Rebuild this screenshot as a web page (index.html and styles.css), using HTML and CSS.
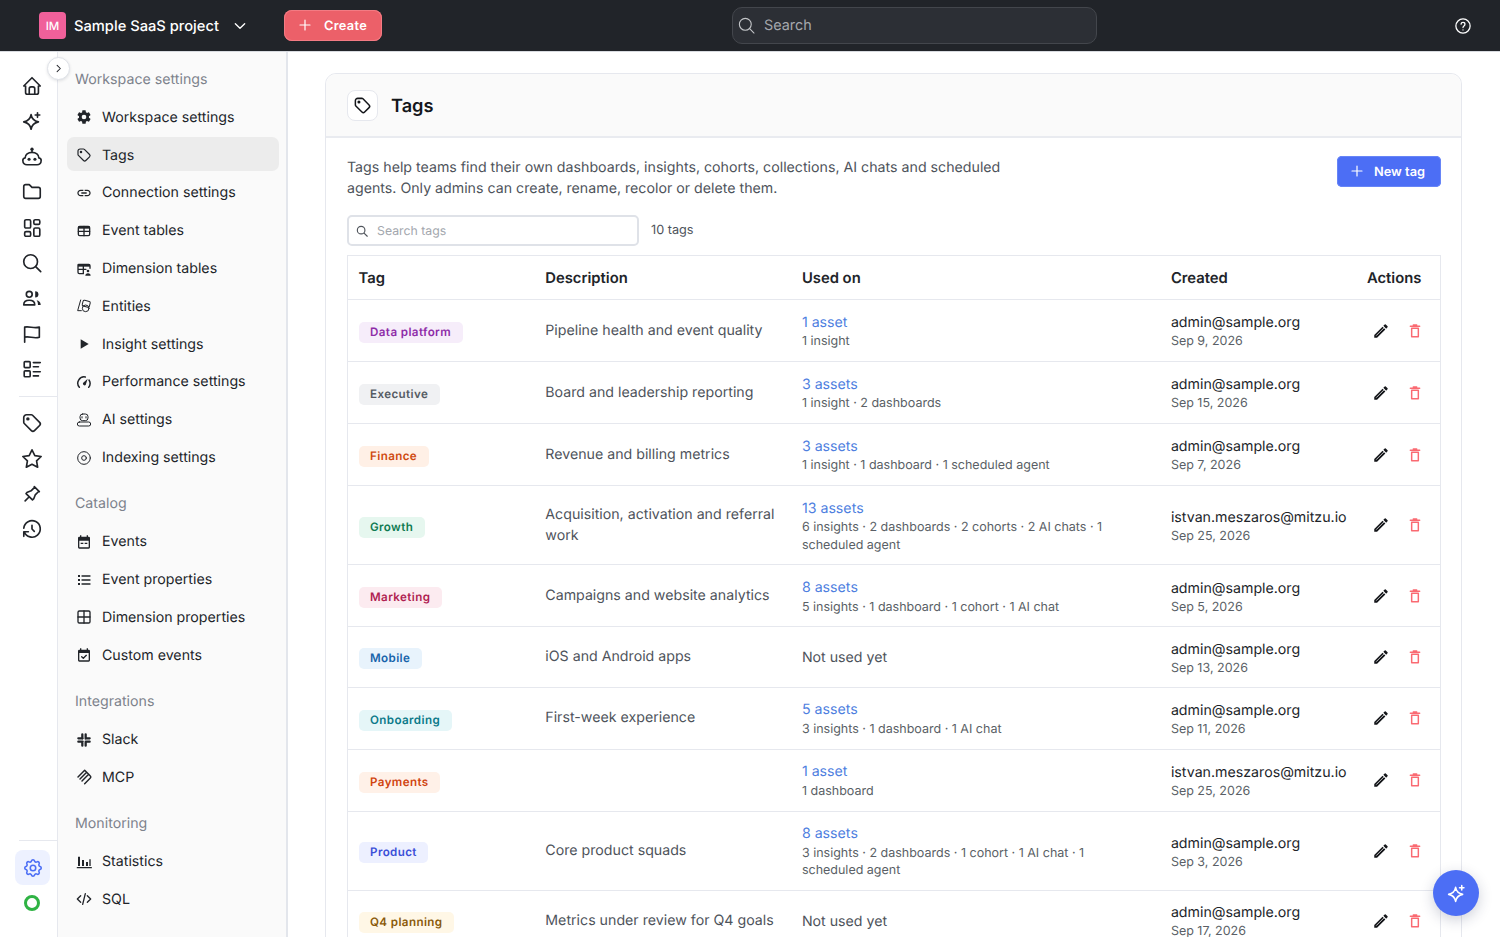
FILE: index.html
```html
<!DOCTYPE html>
<html lang="en">
<head>
<meta charset="utf-8">
<title>Tags</title>
<link rel="stylesheet" href="styles.css">
</head>
<body>
<svg class="defs" aria-hidden="true">
  <symbol id="i-tag" viewBox="0 0 24 24"><path d="M7.5 7.5m-1 0a1 1 0 1 0 2 0a1 1 0 1 0 -2 0M3 6v5.172a2 2 0 0 0 .586 1.414l7.71 7.71a2.41 2.41 0 0 0 3.408 0l5.592 -5.592a2.41 2.41 0 0 0 0 -3.408l-7.71 -7.71a2 2 0 0 0 -1.414 -.586h-5.172a3 3 0 0 0 -3 3z"/></symbol>
  <symbol id="i-spark" viewBox="0 0 24 24"><path d="M11 7c.7 4.200 3.400 7 8 8-4.600 1-7.300 3.800-8 8-.7-4.200-3.400-7-8-8 4.600-1 7.300-3.800 8-8z" transform="translate(0 -2)"/><path d="M18 3v5M15.500 5.500h5"/></symbol>
  <symbol id="i-pencil" viewBox="0 0 24 24"><path class="solid" d="M3 17.250V21h3.750L17.810 9.940l-3.750-3.750L3 17.250zM20.710 7.040a1 1 0 0 0 0-1.410l-2.340-2.340a1 1 0 0 0-1.410 0l-1.830 1.830 3.750 3.750 1.830-1.830z"/><path class="stripe" d="M6 17.800L15.800 8"/></symbol>
  <symbol id="i-trash" viewBox="0 0 24 24"><path d="M7 8h10v12.500H7zM5 5h14M9.500 3h5"/></symbol>
  <symbol id="i-plus" viewBox="0 0 24 24"><path d="M12 4.500v15M4.500 12h15"/></symbol>
</svg>

<header class="topbar">
  <div class="project">
    <span class="avatar">IM</span>
    <span class="project-name">Sample SaaS project</span>
    <svg class="chev" viewBox="0 0 24 24"><path d="M5 8.500l7 7 7-7"/></svg>
  </div>
  <button class="btn btn-create"><svg class="btn-plus"><use href="#i-plus"/></svg>Create</button>
  <div class="global-search">
    <svg class="gs-icon" viewBox="0 0 24 24"><circle cx="10.500" cy="10.500" r="7.500"/><path d="M16 16l5.500 5.500"/></svg>
    <span>Search</span>
  </div>
  <svg class="help" viewBox="0 0 24 24"><circle cx="12" cy="12" r="9.500"/><path d="M12 17.200v.1M12 14c0-2.200 2.600-2 2.600-4.300 0-1.400-1.100-2.400-2.600-2.400s-2.500.9-2.600 2.200"/></svg>
</header>

<div class="app">
  <nav class="rail">
    <div class="rail-group">
      <svg class="ri" viewBox="0 0 24 24"><path d="M5 12H3l9-9 9 9h-2M5 12v7a2 2 0 0 0 2 2h10a2 2 0 0 0 2-2v-7M9 21v-6a2 2 0 0 1 2-2h2a2 2 0 0 1 2 2v6"/></svg>
      <svg class="ri"><use href="#i-spark"/></svg>
      <svg class="ri" viewBox="0 0 24 24"><path d="M4.500 13c0-3.500 3.300-6 7.500-6s7.500 2.500 7.500 6c1.500.3 2.500 1.300 2.500 2.800 0 2.700-2 4.700-4.500 4.700h-11C4 20.500 2 18.500 2 15.800c0-1.500 1-2.500 2.500-2.800zM12 7V4.500"/><circle class="solid" cx="12" cy="3.500" r="1.800"/><circle class="solid" cx="8.800" cy="14.500" r="1.700"/><circle class="solid" cx="15.200" cy="14.500" r="1.700"/></svg>
      <svg class="ri" viewBox="0 0 24 24"><path d="M5 4h4l3 3h7a2 2 0 0 1 2 2v8a2 2 0 0 1-2 2H5a2 2 0 0 1-2-2V6a2 2 0 0 1 2-2"/></svg>
      <svg class="ri" viewBox="0 0 24 24"><rect x="4" y="3" width="6.500" height="9" rx="1.500"/><rect x="4" y="16" width="6.500" height="5" rx="1.500"/><rect x="14" y="12" width="6.500" height="9" rx="1.500"/><rect x="14" y="3" width="6.500" height="5" rx="1.500"/></svg>
      <svg class="ri" viewBox="0 0 24 24"><circle cx="10.500" cy="10.500" r="7.500"/><path d="M16 16l5.500 5.500"/></svg>
      <svg class="ri" viewBox="0 0 24 24"><circle cx="9" cy="8" r="3.200"/><path class="solid" d="M15.500 4.500a3.500 3.500 0 0 1 0 7z"/><path d="M3 19.500c0-3.500 2.500-5 6-5s6 1.500 6 5z"/><path class="solid" d="M17 14.500c2.500.4 4.500 2 4.500 5h-3c0-2-.4-3.600-1.500-5z"/></svg>
      <svg class="ri" viewBox="0 0 24 24"><path d="M4 4.500c4.500-1.500 10.500 2 16 0v11c-5.500 2-11.500-1.500-16 0M4 4.500V21"/></svg>
      <svg class="ri" viewBox="0 0 24 24"><path d="M13.500 5H21M13.500 9.500H19M13.500 15H21M13.500 19.500H19"/><rect x="3.500" y="4" width="6.500" height="6.500" rx="1"/><rect x="3.500" y="14" width="6.500" height="6.500" rx="1"/></svg>
    </div>
    <div class="rail-group rail-second">
      <svg class="ri"><use href="#i-tag"/></svg>
      <svg class="ri" viewBox="0 0 24 24"><path d="M12 17.750l-6.172 3.245 1.179-6.873-5-4.867 6.900-1 3.086-6.253 3.086 6.253 6.900 1-5 4.867 1.179 6.873z"/></svg>
      <svg class="ri" viewBox="0 0 24 24"><path d="M15 4.500l-4 4-4 1.500-1.500 1.500 7 7 1.500-1.500 1.500-4 4-4M9 15l-4.500 4.500M14.500 4l5.500 5.500"/></svg>
      <svg class="ri" viewBox="0 0 24 24"><path d="M12 8v4l2.500 2.500M3.050 11a9 9 0 1 1 .5 4m-.5 5v-5h5"/></svg>
    </div>
    <div class="rail-bottom">
      <span class="rail-active">
        <svg class="ri ri-blue" viewBox="0 0 24 24"><path d="M10.325 4.317c.426-1.756 2.924-1.756 3.350 0a1.724 1.724 0 0 0 2.573 1.066c1.543-.94 3.310.826 2.370 2.370a1.724 1.724 0 0 0 1.065 2.572c1.756.426 1.756 2.924 0 3.350a1.724 1.724 0 0 0-1.066 2.573c.94 1.543-.826 3.310-2.370 2.370a1.724 1.724 0 0 0-2.572 1.065c-.426 1.756-2.924 1.756-3.350 0a1.724 1.724 0 0 0-2.573-1.066c-1.543.94-3.310-.826-2.370-2.370a1.724 1.724 0 0 0-1.065-2.572c-1.756-.426-1.756-2.924 0-3.350a1.724 1.724 0 0 0 1.066-2.573c-.94-1.543.826-3.310 2.370-2.370 1 .608 2.296.07 2.572-1.065z"/><circle cx="12" cy="12" r="3"/></svg>
      </span>
      <span class="status-ring"></span>
    </div>
  </nav>

  <button class="collapse"><svg viewBox="0 0 24 24"><path d="M9 5l7 7-7 7"/></svg></button>

  <aside class="subnav">
    <h4 class="sub-title">Workspace settings</h4>
    <a class="sub-item"><svg class="si" viewBox="0 0 24 24"><path class="solid" d="M19.400 13c.04-.33.07-.66.07-1s-.03-.67-.07-1l2.110-1.650a.5.5 0 0 0 .12-.64l-2-3.460a.5.5 0 0 0-.61-.22l-2.490 1a7.300 7.300 0 0 0-1.690-.98l-.38-2.650A.49.49 0 0 0 14 2h-4a.49.49 0 0 0-.49.42l-.38 2.650c-.61.25-1.170.59-1.690.98l-2.490-1a.5.5 0 0 0-.61.22l-2 3.460a.49.49 0 0 0 .12.64L4.570 11c-.04.33-.07.67-.07 1s.03.67.07 1l-2.110 1.650a.5.5 0 0 0-.12.64l2 3.460c.12.22.39.3.61.22l2.490-1c.52.4 1.080.73 1.690.98l.38 2.650c.03.24.24.42.49.42h4c.25 0 .46-.18.49-.42l.38-2.650c.61-.25 1.170-.59 1.690-.98l2.490 1c.23.09.49 0 .61-.22l2-3.460a.5.5 0 0 0-.12-.64L19.400 13zM12 15.500a3.500 3.500 0 1 1 0-7 3.500 3.500 0 0 1 0 7z"/></svg>Workspace settings</a>
    <a class="sub-item is-active"><svg class="si si-mid"><use href="#i-tag"/></svg>Tags</a>
    <a class="sub-item"><svg class="si" viewBox="0 0 24 24"><path class="solid" d="M3.900 12c0-1.710 1.390-3.100 3.100-3.100h4V7H7c-2.760 0-5 2.240-5 5s2.240 5 5 5h4v-1.900H7c-1.710 0-3.100-1.390-3.100-3.100zM8 13h8v-2H8v2zm9-6h-4v1.900h4c1.710 0 3.100 1.390 3.100 3.100s-1.390 3.100-3.100 3.100h-4V17h4c2.760 0 5-2.240 5-5s-2.240-5-5-5z"/></svg>Connection settings</a>
    <a class="sub-item"><svg class="si" viewBox="0 0 24 24"><rect x="3.500" y="5" width="17" height="14" rx="2"/><path d="M3.500 12.500h17M12 5v14"/><path class="solid" d="M3.500 5h17v3.500h-17z"/></svg>Event tables</a>
    <a class="sub-item"><svg class="si" viewBox="0 0 24 24"><path d="M11 19H5a2 2 0 0 1-2-2V6a1 1 0 0 1 1-1h15a2 2 0 0 1 2 2v4M3 12.500h12M11 5v14"/><path class="solid" d="M3 5h18v3.500H3z"/><circle class="solid" cx="18" cy="15" r="2"/><path class="solid" d="M14 22c0-2 1.500-3.500 4-3.500s4 1.500 4 3.500z"/></svg>Dimension tables</a>
    <a class="sub-item"><svg class="si si-thin" viewBox="0 0 24 24"><path d="M7 3L2.500 19H8"/><rect x="10" y="4" width="11" height="9" rx="2" transform="rotate(15 15 8)"/><circle cx="14.500" cy="15.500" r="5"/></svg>Entities</a>
    <a class="sub-item"><svg class="si" viewBox="0 0 24 24"><path class="solid" d="M7 5l12 7-12 7z"/></svg>Insight settings</a>
    <a class="sub-item"><svg class="si si-bold" viewBox="0 0 24 24"><path class="arc" d="M5 20a9.500 9.500 0 0 1 9-15.500M19.500 9a9.500 9.500 0 0 1-.5 11"/><path class="solid" d="M17.500 7l-3 9.500a2.600 2.600 0 0 1-4-3z"/></svg>Performance settings</a>
    <a class="sub-item"><svg class="si si-thin" viewBox="0 0 24 24"><rect x="6" y="3" width="12" height="10" rx="4"/><path d="M9 7v2M15 7v2M5 15h14a2 2 0 0 1 0 6H5a2 2 0 0 1 0-6z"/></svg>AI settings</a>
    <a class="sub-item"><svg class="si si-thin" viewBox="0 0 24 24"><circle cx="12" cy="12" r="9.500"/><circle cx="12" cy="12" r="3.500"/></svg>Indexing settings</a>

    <h4 class="sub-title">Catalog</h4>
    <a class="sub-item"><svg class="si" viewBox="0 0 24 24"><path class="solid" d="M19 4h-1V2h-2v2H8V2H6v2H5a2 2 0 0 0-2 2v14a2 2 0 0 0 2 2h14a2 2 0 0 0 2-2V6a2 2 0 0 0-2-2zm0 16H5V10h14v10zM7 13h4v2H7zm6 0h4v2h-4z"/></svg>Events</a>
    <a class="sub-item"><svg class="si" viewBox="0 0 24 24"><path d="M9 6h12M9 12h12M9 18h12"/><path class="solid" d="M3 4.500h3v3H3zM3 10.500h3v3H3zM3 16.500h3v3H3z"/></svg>Event properties</a>
    <a class="sub-item"><svg class="si" viewBox="0 0 24 24"><rect x="3" y="3" width="18" height="18" rx="2"/><path d="M12 3v18M3 12h18"/></svg>Dimension properties</a>
    <a class="sub-item"><svg class="si" viewBox="0 0 24 24"><path class="solid" d="M19 4h-1V2h-2v2H8V2H6v2H5a2 2 0 0 0-2 2v14a2 2 0 0 0 2 2h14a2 2 0 0 0 2-2V6a2 2 0 0 0-2-2zm0 16H5V9h14v11z"/><path d="M8.500 14.500l2.500 2.500 4.500-4.500"/></svg>Custom events</a>

    <h4 class="sub-title">Integrations</h4>
    <a class="sub-item"><svg class="si si-heavy" viewBox="0 0 24 24"><path d="M3.500 9.500h6.500M14.500 9.500h6M3.500 14.500h6.500M14.500 14.500h6M9.500 3.500v6.500M9.500 14.500v6M14.500 3.500v6.500M14.500 14.500v6"/></svg>Slack</a>
    <a class="sub-item"><svg class="si si-bold" viewBox="0 0 24 24"><path d="M3 12L13 2l3 3L6 15M6 15l10-10 3 3L9 18M9 18L19 8l2.500 2.500a2 2 0 0 1 0 3L13 22"/></svg>MCP</a>

    <h4 class="sub-title">Monitoring</h4>
    <a class="sub-item"><svg class="si" viewBox="0 0 24 24"><path class="solid" d="M3 4h3v14H3zM9 9h3v9H9zM15 12h3v6h-3zM20 8h2v10h-2z"/><path d="M2 20.500h21"/></svg>Statistics</a>
    <a class="sub-item"><svg class="si" viewBox="0 0 24 24"><path d="M7 7l-5 5 5 5M17 7l5 5-5 5M14 4l-4 16"/></svg>SQL</a>
  </aside>

  <main class="main">
    <section class="card">
      <div class="card-head">
        <span class="head-icon"><svg><use href="#i-tag"/></svg></span>
        <h1>Tags</h1>
      </div>
      <div class="card-body">
        <div class="intro">
          <p>Tags help teams find their own dashboards, insights, cohorts, collections, AI chats and scheduled agents. Only admins can create, rename, recolor or delete them.</p>
          <button class="btn btn-new"><svg class="btn-plus"><use href="#i-plus"/></svg>New tag</button>
        </div>
        <div class="filter">
          <div class="tag-search">
            <svg viewBox="0 0 24 24"><circle cx="10.500" cy="10.500" r="6.500"/><path d="M15.500 15.500l5.500 5.500"/></svg>
            <span>Search tags</span>
          </div>
          <span class="count">10 tags</span>
        </div>
        <table class="tags">
          <thead>
            <tr><th class="c-tag">Tag</th><th class="c-desc">Description</th><th class="c-used">Used on</th><th class="c-created">Created</th><th class="c-act">Actions</th></tr>
          </thead>
          <tbody>
            <tr>
              <td><span class="pill p-purple">Data platform</span></td>
              <td class="desc">Pipeline health and event quality</td>
              <td><a class="assets">1 asset</a><div class="sub">1 insight</div></td>
              <td class="owner"><div class="who">admin@sample.org</div><div class="sub">Sep 9, 2026</div></td>
              <td class="acts"><svg class="a-edit"><use href="#i-pencil"/></svg><svg class="a-del"><use href="#i-trash"/></svg></td>
            </tr>
            <tr>
              <td><span class="pill p-gray">Executive</span></td>
              <td class="desc">Board and leadership reporting</td>
              <td><a class="assets">3 assets</a><div class="sub">1 insight · 2 dashboards</div></td>
              <td class="owner"><div class="who">admin@sample.org</div><div class="sub">Sep 15, 2026</div></td>
              <td class="acts"><svg class="a-edit"><use href="#i-pencil"/></svg><svg class="a-del"><use href="#i-trash"/></svg></td>
            </tr>
            <tr>
              <td><span class="pill p-orange">Finance</span></td>
              <td class="desc">Revenue and billing metrics</td>
              <td><a class="assets">3 assets</a><div class="sub">1 insight · 1 dashboard · 1 scheduled agent</div></td>
              <td class="owner"><div class="who">admin@sample.org</div><div class="sub">Sep 7, 2026</div></td>
              <td class="acts"><svg class="a-edit"><use href="#i-pencil"/></svg><svg class="a-del"><use href="#i-trash"/></svg></td>
            </tr>
            <tr>
              <td><span class="pill p-green">Growth</span></td>
              <td class="desc">Acquisition, activation and referral work</td>
              <td><a class="assets">13 assets</a><div class="sub">6 insights · 2 dashboards · 2 cohorts · 2 AI chats · 1 scheduled agent</div></td>
              <td class="owner"><div class="who">istvan.meszaros@mitzu.io</div><div class="sub">Sep 25, 2026</div></td>
              <td class="acts"><svg class="a-edit"><use href="#i-pencil"/></svg><svg class="a-del"><use href="#i-trash"/></svg></td>
            </tr>
            <tr>
              <td><span class="pill p-pink">Marketing</span></td>
              <td class="desc">Campaigns and website analytics</td>
              <td><a class="assets">8 assets</a><div class="sub">5 insights · 1 dashboard · 1 cohort · 1 AI chat</div></td>
              <td class="owner"><div class="who">admin@sample.org</div><div class="sub">Sep 5, 2026</div></td>
              <td class="acts"><svg class="a-edit"><use href="#i-pencil"/></svg><svg class="a-del"><use href="#i-trash"/></svg></td>
            </tr>
            <tr>
              <td><span class="pill p-blue">Mobile</span></td>
              <td class="desc">iOS and Android apps</td>
              <td class="none">Not used yet</td>
              <td class="owner"><div class="who">admin@sample.org</div><div class="sub">Sep 13, 2026</div></td>
              <td class="acts"><svg class="a-edit"><use href="#i-pencil"/></svg><svg class="a-del"><use href="#i-trash"/></svg></td>
            </tr>
            <tr>
              <td><span class="pill p-teal">Onboarding</span></td>
              <td class="desc">First-week experience</td>
              <td><a class="assets">5 assets</a><div class="sub">3 insights · 1 dashboard · 1 AI chat</div></td>
              <td class="owner"><div class="who">admin@sample.org</div><div class="sub">Sep 11, 2026</div></td>
              <td class="acts"><svg class="a-edit"><use href="#i-pencil"/></svg><svg class="a-del"><use href="#i-trash"/></svg></td>
            </tr>
            <tr>
              <td><span class="pill p-red">Payments</span></td>
              <td class="desc"></td>
              <td><a class="assets">1 asset</a><div class="sub">1 dashboard</div></td>
              <td class="owner"><div class="who">istvan.meszaros@mitzu.io</div><div class="sub">Sep 25, 2026</div></td>
              <td class="acts"><svg class="a-edit"><use href="#i-pencil"/></svg><svg class="a-del"><use href="#i-trash"/></svg></td>
            </tr>
            <tr>
              <td><span class="pill p-indigo">Product</span></td>
              <td class="desc">Core product squads</td>
              <td><a class="assets">8 assets</a><div class="sub">3 insights · 2 dashboards · 1 cohort · 1 AI chat · 1 scheduled agent</div></td>
              <td class="owner"><div class="who">admin@sample.org</div><div class="sub">Sep 3, 2026</div></td>
              <td class="acts"><svg class="a-edit"><use href="#i-pencil"/></svg><svg class="a-del"><use href="#i-trash"/></svg></td>
            </tr>
            <tr>
              <td><span class="pill p-yellow">Q4 planning</span></td>
              <td class="desc">Metrics under review for Q4 goals</td>
              <td class="none">Not used yet</td>
              <td class="owner"><div class="who">admin@sample.org</div><div class="sub">Sep 17, 2026</div></td>
              <td class="acts"><svg class="a-edit"><use href="#i-pencil"/></svg><svg class="a-del"><use href="#i-trash"/></svg></td>
            </tr>
          </tbody>
        </table>
      </div>
    </section>
  </main>
</div>

<button class="fab"><svg><use href="#i-spark"/></svg></button>
</body>
</html>
```
FILE: styles.css
```css
* { box-sizing: border-box; }
html, body { margin: 0; height: 100%; overflow: hidden; }
body { font-family: Inter, "Liberation Sans", sans-serif; font-size: 14.2px; color: #212429; background: #fff; text-rendering: geometricPrecision; }
.defs { position: absolute; width: 0; height: 0; }
svg { fill: none; stroke: currentColor; stroke-linecap: round; stroke-linejoin: round; display: block; }
.solid { fill: currentColor; stroke: none; }
.stripe { stroke: #fff; stroke-width: 1; }

.topbar { height: 52px; background: #212429; display: flex; align-items: center; padding-left: 39px; color: #fff; border-bottom: 1px solid #d8dbe0; }
.project { display: flex; align-items: center; width: 245px; }
.avatar { width: 27px; height: 27px; border-radius: 4px; background: #f0609a; font-size: 11.500px; font-weight: 500; display: flex; align-items: center; justify-content: center; margin-right: 8px; }
.project-name { font-size: 14.700px; font-weight: 500; white-space: nowrap; }
.chev { width: 16px; height: 16px; margin-left: 13px; stroke-width: 2; }
.btn { border: 0; font-family: inherit; text-rendering: inherit; color: #fff; display: flex; align-items: center; font-weight: 600; font-size: 12.800px; letter-spacing: .3px; border-radius: 7px; height: 31px; padding-top: 2px; }
.btn-plus { width: 16px; height: 16px; stroke-width: 1.800; margin-bottom: 2px; }
.btn-create { background: #ec6069; width: 98px; padding-left: 13px; padding-right: 0; gap: 11px; border-radius: 8px; box-shadow: inset 0 0 0 1px #f37b83; }
.global-search { width: 365px; height: 37px; margin-left: 350px; background: #2c2f35; border: 1px solid #43464c; border-radius: 10px; display: flex; align-items: center; padding-left: 4px; gap: 8px; color: #a5a8ad; font-size: 14.400px; }
.gs-icon { width: 19px; height: 19px; stroke-width: 1.400; color: #c3c5c8; }
.help { width: 18px; height: 18px; margin-left: auto; margin-right: 28px; stroke-width: 1.700; }

.app { display: flex; height: calc(100vh - 52px); position: relative; }

.rail { width: 58px; flex: none; border-right: 1px solid #e6e8ee; display: flex; flex-direction: column; padding-top: 23px; }
.rail-group { display: flex; flex-direction: column; gap: 13.400px; margin-left: 19px; padding: 0 0 16px 2px; }
.rail-second { border-top: 1px solid #e6e8ee; padding-top: 15px; }
.ri { width: 22px; height: 22px; stroke-width: 1.800; color: #212429; }
.ri-blue { color: #4c6ef5; stroke-width: 1.700; }
.rail-bottom { margin-top: auto; margin-left: 19px; border-top: 1px solid #e6e8ee; padding: 9px 0 26px; display: flex; flex-direction: column; align-items: flex-start; gap: 10px; }
.rail-active { width: 35px; height: 35px; margin-left: -4px; background: #edf1ff; border-radius: 8px; display: flex; align-items: center; justify-content: center; }
.status-ring { width: 16px; height: 16px; margin-left: 5px; border: 3.500px solid #2fb344; border-radius: 50%; }

.collapse { position: absolute; left: 47px; top: 5px; width: 23px; height: 23px; padding: 0; border-radius: 50%; background: #fff; border: 1px solid #dfe2e8; display: flex; align-items: center; justify-content: center; z-index: 2; color: #212429; box-shadow: 0 1px 3px rgba(30, 40, 60, .12); }
.collapse svg { width: 11px; height: 11px; stroke-width: 2.200; }

.subnav { width: 230px; flex: none; background: #fafafa; border-right: 2px solid #e3e6ec; padding: 17px 7px 0 9px; overflow: hidden; }
.sub-title { margin: 0 0 9.500px; padding-left: 8px; font-weight: 400; font-size: 14.200px; line-height: 21px; color: #7d828c; }
.sub-item { display: flex; align-items: center; height: 33.800px; margin-bottom: 4px; border-radius: 7px; padding: 2px 0 0 9px; gap: 10px; color: #212429; white-space: nowrap; }
.sub-item + .sub-title { margin-top: 20px; }
.is-active { background: #ececec; }
.si { width: 16px; height: 16px; stroke-width: 2; flex: none; }
.si-mid { stroke-width: 1.800; }
.si-thin { stroke-width: 1.500; }
.si-bold { stroke-width: 2.200; }
.si-heavy { stroke-width: 3.400; }

.main { flex: 1; padding: 21px 38px 0 37px; overflow: hidden; min-width: 0; }
.card { border: 1px solid #e6e8ee; border-radius: 11px; background: #fff; }
.card-head { height: 64px; background: #fafafa; border-bottom: 2px solid #e9ebf0; border-radius: 11px 11px 0 0; display: flex; align-items: center; padding-left: 21px; gap: 13px; }
.head-icon { width: 31px; height: 31px; background: #fff; border: 1px solid #e6e8ee; border-radius: 8px; display: flex; align-items: center; justify-content: center; }
.head-icon svg { width: 19px; height: 19px; stroke-width: 1.900; color: #14161a; }
h1 { margin: 2px 0 0; font-size: 18.200px; font-weight: 600; color: #14161a; }

.card-body { padding: 18px 20px 0 21px; }
.intro { display: flex; justify-content: space-between; align-items: flex-start; }
.intro p { margin: 0; padding-top: 1px; width: 670px; line-height: 21px; color: #4e535b; }
.btn-new { background: #4c6ef5; width: 104px; padding-left: 12px; gap: 9px; border-radius: 5px; letter-spacing: 0; box-shadow: inset 0 0 0 1px #6785f7; }
.filter { display: flex; align-items: center; margin-top: 16px; gap: 12px; }
.tag-search { width: 292px; height: 31px; border: 2px solid #dfe2e8; border-radius: 5px; display: flex; align-items: center; padding-left: 6px; gap: 8px; color: #a3a7ae; font-size: 12.300px; }
.tag-search svg { width: 14px; height: 14px; stroke-width: 2; color: #50555c; }
.count { font-size: 12.700px; color: #4e535b; }

.tags { width: 1094px; margin-top: 9px; border-collapse: collapse; table-layout: fixed; border: 1px solid #e6e8ee; }
.tags th { text-align: left; font-weight: 600; height: 44px; padding: 0 11px; color: #212429; font-size: 14.800px; border-bottom: 1px solid #e6e8ee; }
.c-tag { width: 186.800px; }
.c-desc { width: 256.600px; }
.c-used { width: 369px; }
.c-created { width: 196px; }
.tags td { padding: 11.500px 11px 10.500px; border-bottom: 1px solid #e6e8ee; vertical-align: middle; line-height: 21px; }
.tags td.desc, .tags td.acts { padding-top: 10.500px; padding-bottom: 11.500px; }
.tags td.owner { padding-top: 12.500px; padding-bottom: 9.500px; }
.tags th:first-child, .tags td:first-child { padding-left: 10.500px; }
.desc, .none { color: #4e535b; }
.assets { color: #4f7fdf; display: block; line-height: 21.700px; }
.sub { font-size: 12.500px; line-height: 17.300px; color: #5a5f66; }
.who { color: #212429; line-height: 20px; }
.pill { display: block; width: fit-content; margin-top: 3px; height: 21px; line-height: 21px; padding: 0 11.500px; border-radius: 5px; font-size: 11.600px; font-weight: 600; letter-spacing: .4px; white-space: nowrap; }
.p-purple { background: #f6edfa; color: #8e2ca8; }
.p-gray { background: #f0f1f3; color: #555b63; }
.p-orange { background: #fff0e6; color: #cf4a10; }
.p-green { background: #e6f7ef; color: #0f7b52; }
.p-pink { background: #fcebf0; color: #b01e52; }
.p-blue { background: #e8f3fc; color: #1864ab; }
.p-teal { background: #e5f6f8; color: #0c7a8a; }
.p-red { background: #fff1e8; color: #d0440f; }
.p-indigo { background: #edf0ff; color: #3b4fd8; }
.p-yellow { background: #fff7e6; color: #8a5a0a; }
.acts { white-space: nowrap; }
.acts svg { display: inline-block; vertical-align: middle; }
.a-edit { width: 18px; height: 18px; color: #14161a; margin: 0 17px 0 5.500px; }
.a-del { width: 16px; height: 16px; color: #fa6a72; stroke-width: 2.200; }

.fab { position: fixed; left: 1433px; top: 870px; width: 46px; height: 46px; border-radius: 50%; border: 0; padding: 0; background: #4c6ef5; color: #fff; display: flex; align-items: center; justify-content: center; box-shadow: 0 4px 14px rgba(30, 40, 80, .22); }
.fab svg { width: 21px; height: 21px; stroke-width: 1.800; }
```
